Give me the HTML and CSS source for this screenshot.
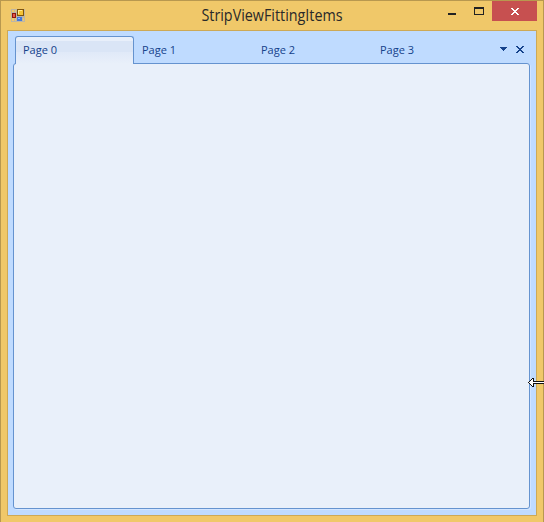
FILE: index.html
```html
<!DOCTYPE html>
<html lang="en">
<head>
<meta charset="utf-8">
<title>StripViewFittingItems</title>
<link rel="stylesheet" href="styles.css">
</head>
<body>
<div class="window">
  <header class="titlebar">
    <svg class="app-icon" width="14" height="14" viewBox="0 0 14 14" shape-rendering="crispEdges">
      <path fill-rule="evenodd" d="M0 1h14v13H0zM1 2v2h2V2zM4 2v2h1V2zM1 10v3h2v-3zM4 10v3h1v-3zM12 10v3h1v-3z" fill="#bdb6a5"/>
      <path d="M6 1h7v7H6z" fill="#80540b"/><path d="M7 2h5v5H7z" fill="#f4c335"/><path d="M7 2h4v1H8v3H7z" fill="#ffeb91"/>
      <path d="M1 5h4v5H1z" fill="#8d1711"/><path d="M2 6h2v3H2z" fill="#e6574a"/>
      <path d="M6 9h5v4H6z" fill="#4479dc"/><path d="M7 10h2v1H7z" fill="#91b9ff"/>
    </svg>
    <h1 class="title">StripViewFittingItems</h1>
    <div class="controls">
      <svg class="min" width="8" height="2"><path d="M0 0h8v2H0z" fill="#222"/></svg>
      <svg class="max" width="10" height="8" shape-rendering="crispEdges"><path fill-rule="evenodd" d="M0 0h10v8H0zM1 2v5h8V2z" fill="#222"/></svg>
      <div class="close">
        <svg width="8" height="7" viewBox="0 0 8 7" shape-rendering="crispEdges"><path fill="#fff" d="M0 0h2v1H0zM6 0h2v1H6zM1 1h2v1H1zM5 1h2v1H5zM2 2h4v1H2zM3 3h2v1H3zM2 4h4v1H2zM1 5h2v1H1zM5 5h2v1H5zM0 6h2v1H0zM6 6h2v1H6z"/></svg>
      </div>
    </div>
  </header>
  <main class="client">
    <nav class="tabs">
      <div class="tab active">Page 0</div>
      <div class="tab">Page 1</div>
      <div class="tab">Page 2</div>
      <div class="tab">Page 3</div>
      <div class="tools">
        <svg width="7" height="4" shape-rendering="crispEdges"><path fill="#15428b" d="M0 0h7v1H0zM1 1h5v1H1zM2 2h3v1H2zM3 3h1v1H3z"/></svg>
        <svg width="8" height="7" shape-rendering="crispEdges"><path fill="#15428b" d="M0 0h2v1H0zM6 0h2v1H6zM1 1h2v1H1zM5 1h2v1H5zM2 2h4v1H2zM3 3h2v1H3zM2 4h4v1H2zM1 5h2v1H1zM5 5h2v1H5zM0 6h2v1H0zM6 6h2v1H6z"/></svg>
      </div>
    </nav>
    <section class="page"></section>
  </main>
</div>
<svg class="cursor" width="16" height="11" viewBox="0 0 16 11" shape-rendering="crispEdges">
  <path fill="#111" d="M0 5h1v1H0zM1 4h1v3H1zM2 3h1v5H2zM3 2h1v7H3zM4 1h1v9H4zM5 1h1v9H5zM5 4h11v3H5z"/>
  <path fill="#fff" d="M1 5h15v1H1zM2 4h1v3H2zM3 3h1v5H3zM4 2h1v7H4z"/>
</svg>
</body>
</html>
```
FILE: styles.css
```css
* { box-sizing: border-box; }
body { margin: 0; overflow: hidden; font-family: "Open Sans", "Noto Sans", sans-serif; }
svg { display: block; }
.window {
  height: 522px;
  padding: 0 6px 6px;
  border: 1px solid #b8984f;
  border-bottom: 0;
  background: #f0c869;
}
.titlebar {
  display: grid;
  grid-template-columns: 98px 1fr 98px;
  height: 29px;
}
.app-icon { margin: 7px 0 0 4px; }
.title {
  margin: 4px 0 0;
  color: #292929;
  font-size: 16px;
  font-weight: 400;
  line-height: 20px;
  text-align: center;
  white-space: nowrap;
  transform: scaleX(0.895);
}
.controls { display: flex; align-items: flex-start; justify-content: flex-end; }
.min { margin: 12px 18px 0 0; }
.max { margin: 6px 8px 0 0; }
.close {
  display: grid;
  place-items: center;
  width: 45px;
  height: 20px;
  padding-top: 1px;
  background: #c75050;
}
.client {
  height: 486px;
  padding: 5px 6px 6px 5px;
  border: 1px solid #cda956;
  background: #bfdbff;
}
.tabs {
  display: flex;
  height: 28px;
  padding-left: 2px;
  margin-bottom: -1px;
}
.tab {
  width: 119px;
  padding: 5px 8px;
  color: #15428b;
  font-size: 11px;
  line-height: 17px;
  letter-spacing: 0;
}
.active {
  position: relative;
  z-index: 1;
  border: 1px solid #6593cf;
  border-bottom: 0;
  border-radius: 3px 3px 0 0;
  padding: 4px 7px;
  background: linear-gradient(#e8effa 0 4px, #dae5f6 4px, #dae5f6 15px, #e0e9f8 15px, #e9f0fa 100%);
}
.tools { display: flex; align-items: center; gap: 9px; margin: -2px 0 0 9px; }
.page {
  height: 446px;
  border: 1px solid #6593cf;
  border-radius: 3px;
  background: #e9f0fa;
  box-shadow: 1px 1px 0 #d2e5ff;
}
.cursor { position: absolute; left: 528px; top: 377px; }
```
